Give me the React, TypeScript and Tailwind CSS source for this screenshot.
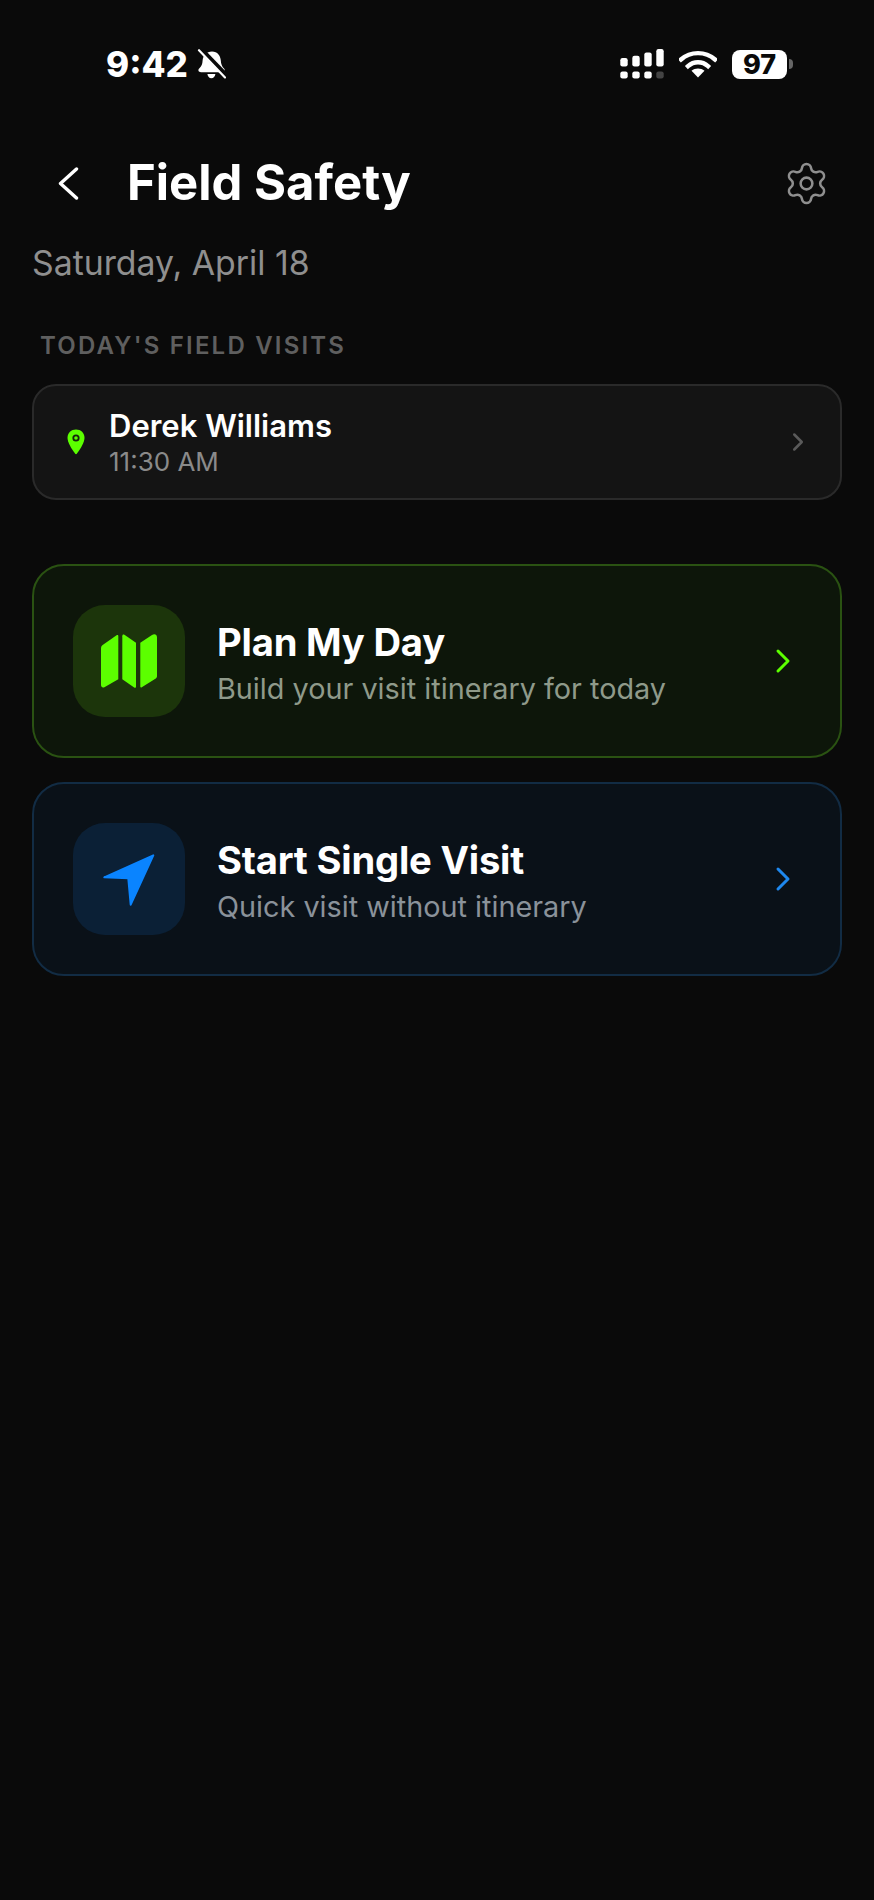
import { ChevronRight, Settings } from "lucide-react";

const fontStyle = "font-['Inter',sans-serif]";

const SignalIcon = () => (
  <svg width="44" height="30" viewBox="0 0 44 30" className="block">
    <rect x="0.3" y="9" width="7.4" height="8.4" rx="2.2" fill="#fff" />
    <rect x="12.3" y="6.7" width="7.4" height="10.7" rx="2.2" fill="#fff" />
    <rect x="24.3" y="3.4" width="7.4" height="14" rx="2.2" fill="#fff" />
    <rect x="36.3" y="0" width="7.4" height="17.4" rx="2.2" fill="#fff" />
    <rect x="0.3" y="22.4" width="7.4" height="7" rx="2.2" fill="#fff" />
    <rect x="12.3" y="22.4" width="7.4" height="7" rx="2.2" fill="#fff" />
    <rect x="24.3" y="22.4" width="7.4" height="7" rx="2.2" fill="#fff" />
    <rect x="36.3" y="22.4" width="7.4" height="7" rx="2.2" fill="#444" />
  </svg>
);

const WifiIcon = () => (
  <svg width="38" height="28" viewBox="0 0 38 28" className="block">
    <path d="M2 9.5C11.5 1 26.5 1 36 9.5" fill="none" stroke="#fff" strokeWidth="4.4" strokeLinecap="square" />
    <path d="M9 16.2C14.8 11 23.2 11 29 16.2" fill="none" stroke="#fff" strokeWidth="4.4" strokeLinecap="square" />
    <path d="M19 27.5L12.5 20.8C16.2 17.8 21.8 17.8 25.5 20.8Z" fill="#fff" />
  </svg>
);

const BellSlashIcon = () => (
  <svg width="29" height="30" viewBox="0 0 29 30" className="block">
    <path
      d="M15 2.5C20.5 2.5 23.4 6.5 23.8 11.5C24 15 25 17.5 27 19.6C28.4 21.2 27.6 23.2 25.4 23.2H4C1.6 23.2 0.6 21.2 2.2 19.6C4.6 17.2 5.4 15 5.6 11.5C6 6.5 9.5 2.5 15 2.5ZM10.4 25H18.4C18 27.6 16.6 29.2 14.4 29.2C12.2 29.2 10.8 27.6 10.4 25Z"
      fill="#fff"
    />
    <path d="M5 1.5L30 27.5" stroke="#0a0a0a" strokeWidth="5" />
    <path d="M2 1.2L28 28.4" stroke="#fff" strokeWidth="2.2" strokeLinecap="round" />
  </svg>
);

const BackIcon = () => (
  <svg width="21" height="33" viewBox="0 0 21 33" className="block">
    <path d="M18.5 2L2.5 16.5L18.5 31" fill="none" stroke="#fff" strokeWidth="3.4" strokeLinecap="round" strokeLinejoin="round" />
  </svg>
);

const PinIcon = () => (
  <svg width="18" height="26" viewBox="0 0 18 26" className="block">
    <path d="M9 0.5C13.8 0.5 17.5 4 17.5 8.8C17.5 13.2 13.6 20 9.8 24.8C9.3 25.4 8.7 25.4 8.2 24.8C4.4 20 0.5 13.2 0.5 8.8C0.5 4 4.2 0.5 9 0.5Z" fill="#5cff00" />
    <circle cx="9" cy="9" r="2.7" fill="none" stroke="#14240c" strokeWidth="1.8" />
  </svg>
);

const MapIcon = () => (
  <svg width="112" height="112" viewBox="0 0 112 112" className="block">
    <path d="M30 39.8L43.6 30.2C44.5 29.6 45.3 30 45.3 31V74.3L31.4 82.2C29.6 83.2 28 82 28 80V43.5C28 41.8 28.6 40.8 30 39.8Z" fill="#5cff00" />
    <path d="M49.3 31.2C49.3 29.6 50.2 29 51.4 29.8L63 37.7V81.4C63 82.6 62.2 83 61.2 82.4L49.3 74.3Z" fill="#5cff00" />
    <path d="M67.3 37.7L79 30C81.6 28.4 84 29.6 84 32.5V71C84 72.4 83.5 73 82.4 73.8L68.8 82.2C67.9 82.8 67.3 82.4 67.3 81.4Z" fill="#5cff00" />
  </svg>
);

const NavIcon = () => (
  <svg width="112" height="112" viewBox="0 0 112 112" className="block">
    <path d="M80.3 32.3L31.3 54.3L55.3 55.3L57.7 81.7Z" fill="#0a84ff" stroke="#0a84ff" strokeWidth="2" strokeLinejoin="round" />
  </svg>
);

const ActionCard = ({
  icon,
  title,
  subtitle,
  cardClass,
  iconBoxClass,
  subtitleClass,
  chevronClass,
}: {
  icon: React.ReactNode;
  title: string;
  subtitle: string;
  cardClass: string;
  iconBoxClass: string;
  subtitleClass: string;
  chevronClass: string;
}) => {
  return (
    <div className={`flex h-[194px] flex-row items-center rounded-[32px] border-2 pl-[39px] pr-[37px] ${cardClass}`}>
      <div className={`flex h-[112px] w-[112px] shrink-0 items-center justify-center rounded-[32px] ${iconBoxClass}`}>
        {icon}
      </div>
      <div className="ml-[32px] flex flex-1 flex-col pt-[4px]">
        <p className="text-[38.2px] font-bold leading-[46px] tracking-[-0.2px] text-white">{title}</p>
        <p className={`mt-[5px] text-[28.8px] leading-[38px] ${subtitleClass}`}>{subtitle}</p>
      </div>
      <ChevronRight size={40} strokeWidth={1.8} className={chevronClass} />
    </div>
  );
};

export default function App() {
  return (
    <div className={`min-h-[1900px] w-full bg-[#0a0a0a] ${fontStyle}`}>
      <div className="flex flex-row items-center justify-between pl-[106px] pr-[81px] pt-[49px]">
        <div className="flex flex-row items-center gap-[9px]">
          <span className="text-[35px] font-extrabold leading-[30px] text-white">9:42</span>
          <BellSlashIcon />
        </div>
        <div className="flex flex-row items-center gap-[15px]">
          <SignalIcon />
          <WifiIcon />
          <div className="flex flex-row items-center gap-[2px]">
            <div className="flex h-[29px] w-[55px] items-center justify-center rounded-[8px] bg-white text-[27px] font-extrabold leading-none text-[#0a0a0a]">
              97
            </div>
            <div className="h-[10px] w-[4px] rounded-r-full bg-[#666]" />
          </div>
        </div>
      </div>

      <div className="px-[32px]">
        <div className="mt-[72px] flex h-[64px] flex-row items-center">
          <div className="ml-[26px]">
            <BackIcon />
          </div>
          <h1 className="ml-[48px] flex-1 text-[49px] font-bold leading-[64px] text-white">Field Safety</h1>
          <Settings size={47} strokeWidth={1.3} className="mr-[12px] text-[#8f8f8f]" />
        </div>

        <p className="mt-[28px] text-[33.8px] leading-[40px] text-[#8f8f8f]">Saturday, April 18</p>

        <p className="ml-[8px] mt-[48px] text-[24px] font-semibold leading-[30px] tracking-[2.2px] text-[#5f5f5f]">
          TODAY&apos;S FIELD VISITS
        </p>

        <div className="mt-[23px] flex h-[116px] flex-row items-center rounded-[24px] border-2 border-[#2a2a2a] bg-[#141414] pl-[33px] pr-[27px]">
          <PinIcon />
          <div className="ml-[24px] flex flex-1 flex-col pt-[1px]">
            <p className="text-[31px] font-semibold leading-[38px] text-white">Derek Williams</p>
            <p className="text-[26px] leading-[33px] text-[#8a8a8a]">11:30 AM</p>
          </div>
          <ChevronRight size={30} strokeWidth={2} className="text-[#5a5a5a]" />
        </div>

        <div className="mt-[64px] flex flex-col gap-[24px]">
          <ActionCard
            icon={<MapIcon />}
            title="Plan My Day"
            subtitle="Build your visit itinerary for today"
            cardClass="border-[#2a5212] bg-[#0d160a]"
            iconBoxClass="bg-[#1c350b]"
            subtitleClass="text-[#8f9a8a]"
            chevronClass="text-[#5cff00]"
          />
          <ActionCard
            icon={<NavIcon />}
            title="Start Single Visit"
            subtitle="Quick visit without itinerary"
            cardClass="border-[#122c44] bg-[#0a1118]"
            iconBoxClass="bg-[#0b2036]"
            subtitleClass="text-[#8a929a]"
            chevronClass="text-[#1e88ee]"
          />
        </div>
      </div>
    </div>
  );
}
